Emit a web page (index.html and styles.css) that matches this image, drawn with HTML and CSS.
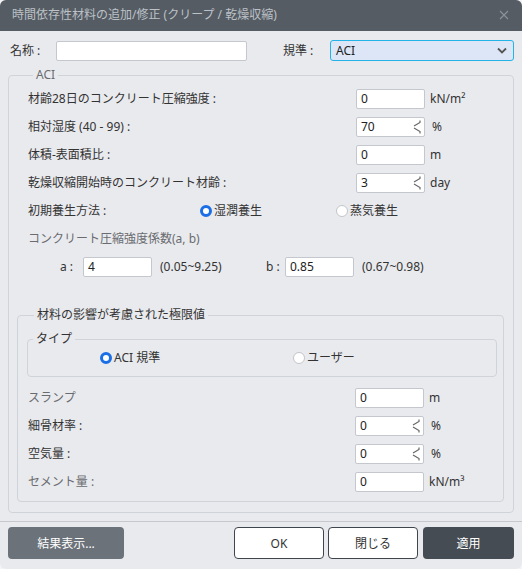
FILE: index.html
```html
<!DOCTYPE html>
<html lang="ja">
<head>
<meta charset="utf-8">
<link rel="stylesheet" href="styles.css">
</head>
<body>
<div class="dialog">
  <div class="titlebar">
    <span class="title">時間依存性材料の追加/修正 (クリープ / 乾燥収縮)</span>
    <svg class="close" width="10" height="10" viewBox="0 0 10 10"><path d="M1 1 L9 9 M9 1 L1 9" stroke="#8b9197" stroke-width="1.2" fill="none"/></svg>
  </div>
  <div class="content">
    <div class="name-row">
      <span class="name-label">名称 :</span>
      <div class="field name-field"></div>
      <span class="std-label">規準 :</span>
      <div class="select"><span>ACI</span>
        <svg width="10" height="7" viewBox="0 0 10 7"><path d="M1 1.5 L5 5.5 L9 1.5" stroke="#555" stroke-width="1.8" fill="none"/></svg>
      </div>
    </div>

    <fieldset class="group outer">
      <legend class="muted">ACI</legend>
      <div class="row"><span class="label">材齢28日のコンクリート圧縮強度 :</span><div class="field">0</div><span class="unit">kN/m²</span></div>
      <div class="row"><span class="label">相対湿度 (40 - 99) :</span><div class="field spin">70<svg width="9" height="16" viewBox="0 0 9 16"><path d="M8 1.5 V3.5 L2 7 M2 9 L8 12.5 V14.5" stroke="#666" stroke-width="1.2" fill="none"/></svg></div><span class="unit u2">%</span></div>
      <div class="row"><span class="label">体積-表面積比 :</span><div class="field">0</div><span class="unit">m</span></div>
      <div class="row"><span class="label">乾燥収縮開始時のコンクリート材齢 :</span><div class="field spin">3<svg width="9" height="16" viewBox="0 0 9 16"><path d="M8 1.5 V3.5 L2 7 M2 9 L8 12.5 V14.5" stroke="#666" stroke-width="1.2" fill="none"/></svg></div><span class="unit">day</span></div>
      <div class="row">
        <span class="label cure">初期養生方法 :</span>
        <span class="radio r1"><span class="dot on"></span>湿潤養生</span>
        <span class="radio"><span class="dot"></span>蒸気養生</span>
      </div>
      <div class="row"><span class="label muted">コンクリート圧縮強度係数(a, b)</span></div>
      <div class="row ab">
        <span class="ab-a">a :</span><div class="field">4</div><span class="range r-a">(0.05~9.25)</span>
        <span class="ab-b">b :</span><div class="field">0.85</div><span class="range">(0.67~0.98)</span>
      </div>

      <fieldset class="group inner">
        <legend>材料の影響が考慮された極限値</legend>
        <fieldset class="group type">
          <legend>タイプ</legend>
          <div class="type-row">
            <span class="radio t1"><span class="dot on"></span>ACI 規準</span>
            <span class="radio"><span class="dot"></span>ユーザー</span>
          </div>
        </fieldset>
        <div class="rows2">
          <div class="row"><span class="label l2 muted">スランプ</span><div class="field">0</div><span class="unit">m</span></div>
          <div class="row"><span class="label l2">細骨材率 :</span><div class="field spin">0<svg width="9" height="16" viewBox="0 0 9 16"><path d="M8 1.5 V3.5 L2 7 M2 9 L8 12.5 V14.5" stroke="#666" stroke-width="1.2" fill="none"/></svg></div><span class="unit u2">%</span></div>
          <div class="row"><span class="label l2">空気量 :</span><div class="field spin">0<svg width="9" height="16" viewBox="0 0 9 16"><path d="M8 1.5 V3.5 L2 7 M2 9 L8 12.5 V14.5" stroke="#666" stroke-width="1.2" fill="none"/></svg></div><span class="unit u2">%</span></div>
          <div class="row"><span class="label l2 muted">セメント量 :</span><div class="field">0</div><span class="unit">kN/m³</span></div>
        </div>
      </fieldset>
    </fieldset>

    <div class="separator"></div>
    <div class="buttons">
      <button class="btn gray">結果表示...</button>
      <span class="spacer"></span>
      <button class="btn light">OK</button>
      <button class="btn light">閉じる</button>
      <button class="btn dark">適用</button>
    </div>
  </div>
</div>
</body>
</html>
```

FILE: styles.css
```css
* { box-sizing: border-box; }
html, body { margin: 0; padding: 0; background: #f3f4f6; }
body {
  font-family: "Noto Sans", "Noto Sans CJK JP", sans-serif;
  font-size: 12px;
  line-height: 14px;
  color: #333;
}
.dialog {
  width: 522px;
  height: 569px;
  background: #e9eaee;
  border-radius: 6px;
  overflow: hidden;
  display: flex;
  flex-direction: column;
}
.titlebar {
  height: 31px;
  background: #555c64;
  display: flex;
  align-items: center;
  justify-content: space-between;
  padding: 0 12px 1px 12px;
  flex: none;
}
.title { color: #bcc1c6; font-size: 12px; line-height: 16px; }
.close { margin-right: 1px; }
.content { padding: 9px 8px 0 8px; }

.name-row { display: flex; align-items: center; height: 21px; }
.name-label { width: 48px; padding-left: 2px; }
.field {
  width: 69px;
  height: 20px;
  background: #fff;
  border: 1px solid #c4c7cd;
  border-radius: 2px;
  padding: 0 3px 0 4px;
  display: flex;
  align-items: center;
  justify-content: space-between;
  color: #222;
  flex: none;
}
.name-field { width: 191px; height: 20px; }
.std-label { margin-left: 36px; width: 47px; }
.select {
  width: 184px;
  height: 21px;
  background: #dce6f7;
  border: 1px solid #22b4e6;
  border-radius: 3px;
  display: flex;
  align-items: center;
  justify-content: space-between;
  padding: 0 6px 0 5px;
  color: #222;
}

.group {
  margin: 0;
  border: 1px solid #d0d3d9;
  border-radius: 4px;
  min-width: 0;
}
.group legend { padding: 0 3px; line-height: 14px; margin-left: 6px; }
.outer { margin-top: 7px; padding: 3px 0 0 19px; height: 445px; }
.outer > legend { margin-left: 5px; }
.row { display: flex; align-items: center; height: 28px; }
.label { width: 328px; flex: none; color: #333; }
.unit { margin-left: 5px; }
.u2 { margin-left: 7px; }
.muted { color: #6a6c70; }
.label.muted { color: #6a6c70; }
.cure { width: 172px; }
.radio { display: flex; align-items: center; }
.r1 { width: 136px; }
.dot {
  width: 12px; height: 12px; border-radius: 50%;
  border: 1px solid #c3c5c9; background: #fff;
  margin-right: 2px; flex: none;
}
.dot.on { border: 3px solid #1a6fe6; background: #fff; }
.ab-a { width: 55px; text-align: right; padding-right: 10px; flex: none; }
.r-a { width: 113px; padding-left: 9px; flex: none; }
.range { padding-left: 8px; }
.ab-b { width: 20px; flex: none; padding-left: 1px; }

.inner { margin: 27px 9px 0 -11px; padding: 0 6px 5px 9px; }
.inner > legend { margin-left: 7px; }
.type { margin: 10px 0 0 0; padding: 0 0 6px 0; }
.type > legend { margin-left: 5px; }
.type-row { display: flex; align-items: center; height: 24px; padding-left: 72px; }
.t1 { width: 193px; }
.rows2 { margin-top: 7px; padding-left: 1px; }
.l2 { width: 327px; }

.separator { height: 1px; background: #c6c8cd; margin: 8px -8px 0 -8px; }
.buttons { display: flex; margin-top: 5px; height: 32px; gap: 4px; }
.spacer { flex: 1; }
.btn {
  font-family: inherit; font-size: 12px; border-radius: 4px;
  height: 32px; padding: 0; cursor: default;
}
.gray { width: 116px; background: #6b7279; color: #fff; border: none; }
.light { width: 90px; background: #fff; color: #333; border: 1px solid #3f454c; }
.dark { width: 91px; background: #464c54; color: #fff; border: none; margin-left: 1px; }
```
